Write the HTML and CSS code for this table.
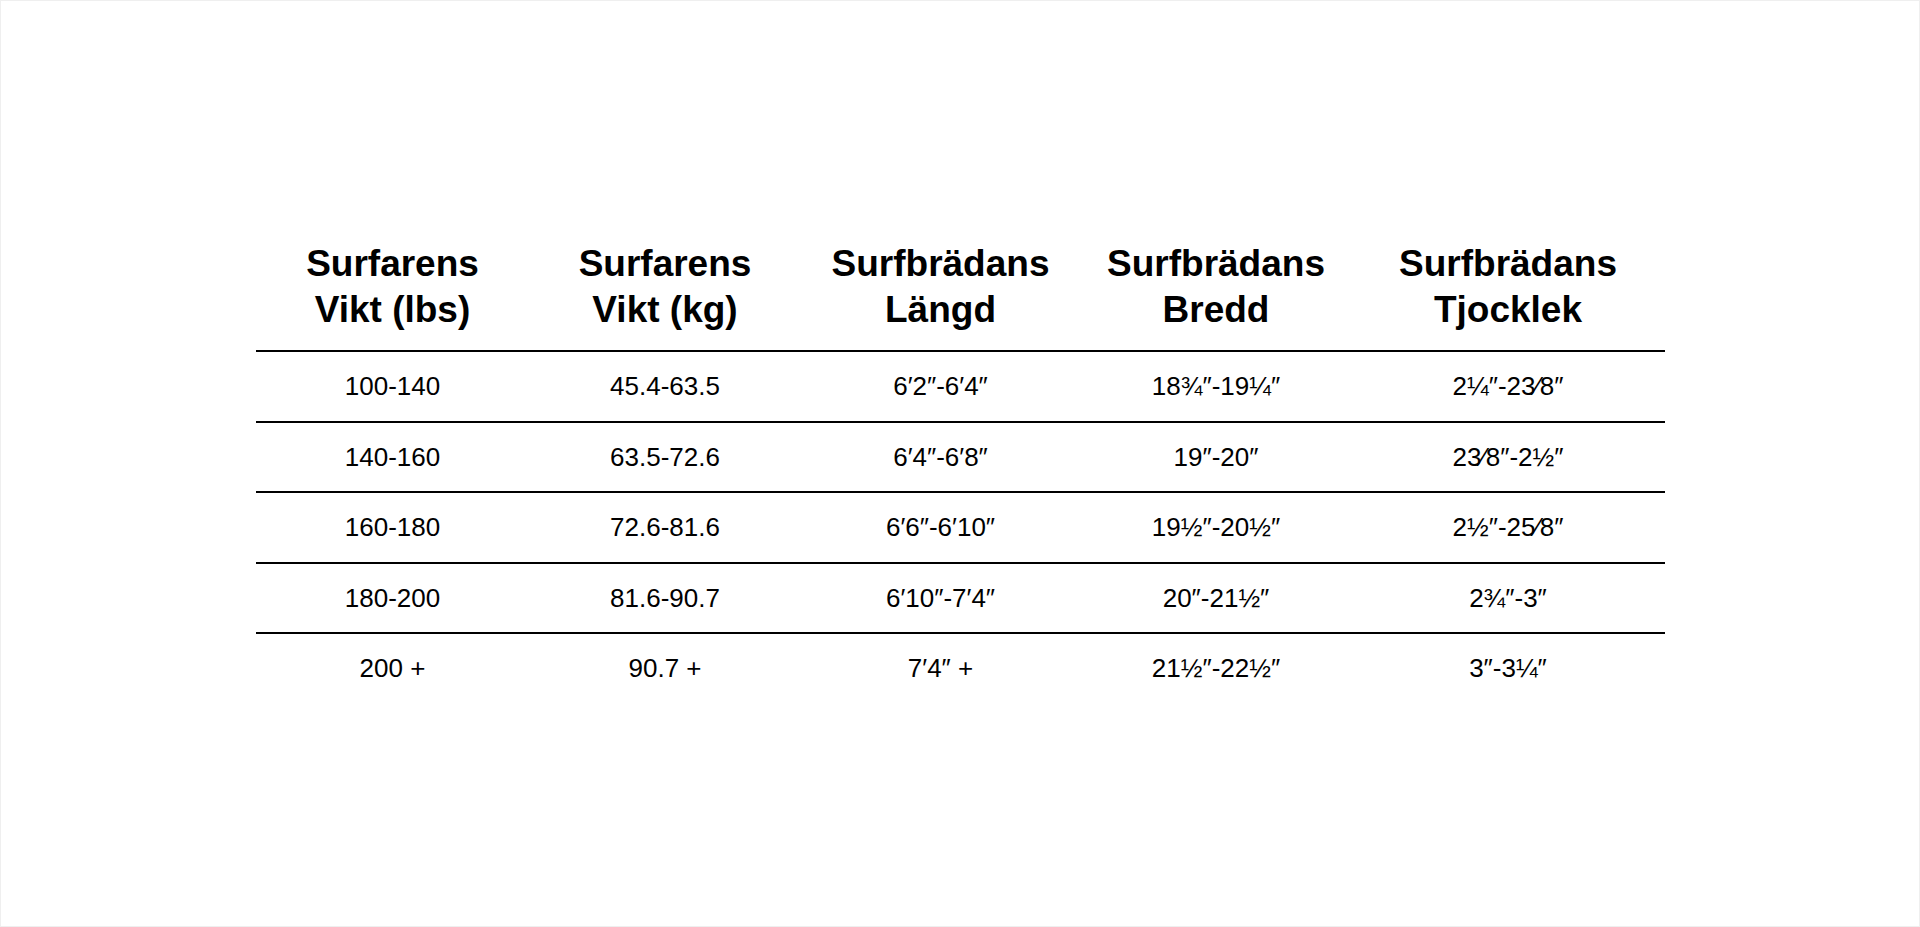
FILE: index.html
```html
<!DOCTYPE html>
<html lang="sv">
<head>
<meta charset="utf-8">
<title>Storleksguide</title>
<link rel="stylesheet" href="styles.css">
</head>
<body>
<div class="page">
  <table class="size-table">
    <colgroup>
      <col class="c1"><col class="c2"><col class="c3"><col class="c4"><col class="c5">
    </colgroup>
    <thead>
      <tr>
        <th>Surfarens<br>Vikt (lbs)</th>
        <th>Surfarens<br>Vikt (kg)</th>
        <th>Surfbrädans<br>Längd</th>
        <th>Surfbrädans<br>Bredd</th>
        <th>Surfbrädans<br>Tjocklek</th>
      </tr>
    </thead>
    <tbody>
      <tr><td>100-140</td><td>45.4-63.5</td><td>6′2″-6′4″</td><td>18¾″-19¼″</td><td>2¼″-23⁄8″</td></tr>
      <tr><td>140-160</td><td>63.5-72.6</td><td>6′4″-6′8″</td><td>19″-20″</td><td>23⁄8″-2½″</td></tr>
      <tr><td>160-180</td><td>72.6-81.6</td><td>6′6″-6′10″</td><td>19½″-20½″</td><td>2½″-25⁄8″</td></tr>
      <tr><td>180-200</td><td>81.6-90.7</td><td>6′10″-7′4″</td><td>20″-21½″</td><td>2¾″-3″</td></tr>
      <tr><td>200 +</td><td>90.7 +</td><td>7′4″ +</td><td>21½″-22½″</td><td>3″-3¼″</td></tr>
    </tbody>
  </table>
</div>
</body>
</html>
```

FILE: styles.css
```css
html, body {
  margin: 0;
  padding: 0;
  background: #ffffff;
}

.page {
  box-sizing: border-box;
  width: 100%;
  height: 927px;
  border: 1px solid #efefef;
  padding-top: 240px;
  font-family: "Liberation Sans", Arial, sans-serif;
  color: #000000;
}

.size-table {
  width: 1409px;
  margin: 0 auto;
  border-collapse: separate;
  border-spacing: 0;
  table-layout: fixed;
}

.c1 { width: 274px; }
.c2 { width: 271px; }
.c3 { width: 280px; }
.c4 { width: 271px; }
.c5 { width: 313px; }

.size-table th {
  font-size: 37px;
  font-weight: bold;
  line-height: 46px;
  text-align: center;
  padding: 0 0 17px;
  border-bottom: 2px solid #000000;
}

.size-table td {
  font-size: 26px;
  line-height: 30px;
  text-align: center;
  padding: 19.25px 0;
  border-bottom: 2px solid #000000;
}

.size-table tbody tr:last-child td {
  border-bottom: none;
}
```
